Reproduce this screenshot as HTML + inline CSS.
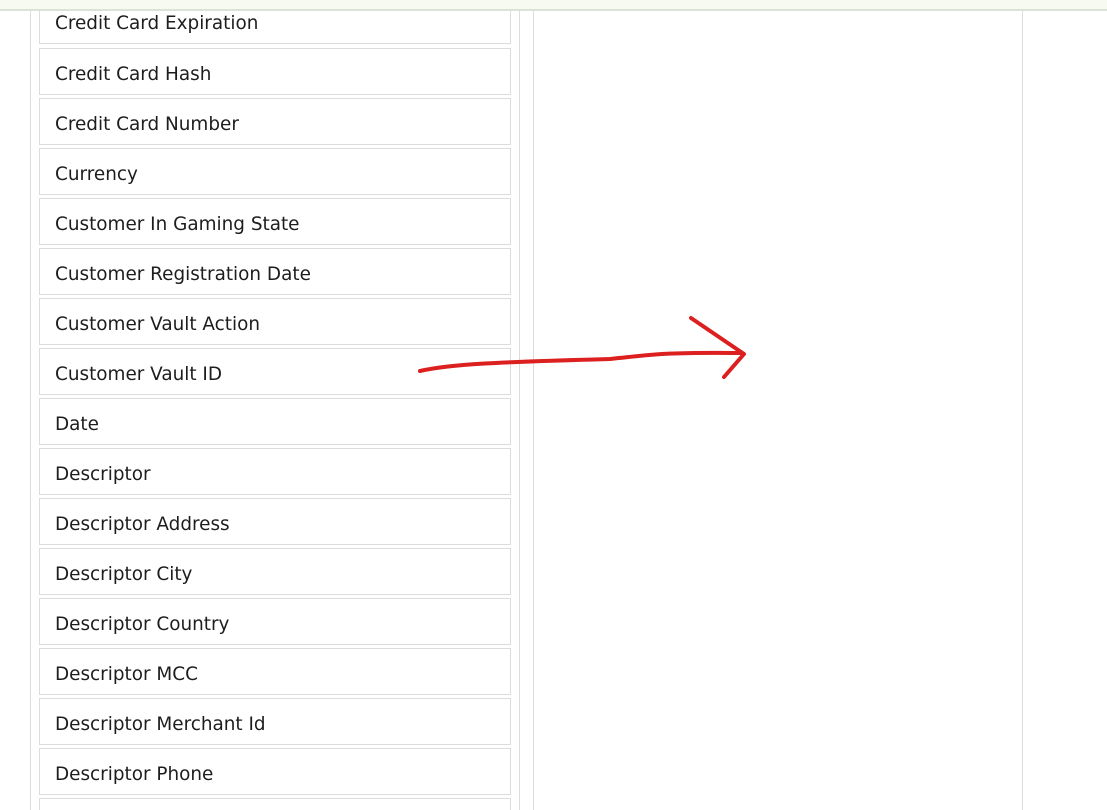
<!DOCTYPE html>
<html><head><meta charset="utf-8"><style>
html,body{margin:0;padding:0;background:#fff;width:1107px;height:810px;overflow:hidden;position:relative;font-family:"DejaVu Sans","Liberation Sans",sans-serif}
.top{position:absolute;left:0;top:0;width:1107px;height:9px;background:#f7faf0;border-bottom:2px solid #dde2d8}
.v{position:absolute;top:11px;bottom:0;width:1px;background:#dcdcdc}
.item{position:absolute;left:39px;width:470px;height:45px;border:1px solid #dcdcdc;box-sizing:content-box;font-size:18.4px;color:#1d1d1d;line-height:45px}
.item span{position:absolute;left:15px;top:3px}
</style></head><body>
<div class="v" style="left:30px"></div>
<div class="v" style="left:519px"></div>
<div class="v" style="left:533px"></div>
<div class="v" style="left:1022px"></div>
<div class="item" style="top:-3px"><span>Credit Card Expiration</span></div>
<div class="item" style="top:48px"><span>Credit Card Hash</span></div>
<div class="item" style="top:98px"><span>Credit Card Number</span></div>
<div class="item" style="top:148px"><span>Currency</span></div>
<div class="item" style="top:198px"><span>Customer In Gaming State</span></div>
<div class="item" style="top:248px"><span>Customer Registration Date</span></div>
<div class="item" style="top:298px"><span>Customer Vault Action</span></div>
<div class="item" style="top:348px"><span>Customer Vault ID</span></div>
<div class="item" style="top:398px"><span>Date</span></div>
<div class="item" style="top:448px"><span>Descriptor</span></div>
<div class="item" style="top:498px"><span>Descriptor Address</span></div>
<div class="item" style="top:548px"><span>Descriptor City</span></div>
<div class="item" style="top:598px"><span>Descriptor Country</span></div>
<div class="item" style="top:648px"><span>Descriptor MCC</span></div>
<div class="item" style="top:698px"><span>Descriptor Merchant Id</span></div>
<div class="item" style="top:748px"><span>Descriptor Phone</span></div>
<div class="item" style="top:798px"><span></span></div>
<div class="top"></div>
<svg style="position:absolute;left:0;top:0" width="1107" height="810">
<path d="M420 371 C 450 364, 500 362, 610 359 C 650 355, 660 352, 742 353" stroke="#dc1f1f" stroke-width="4" fill="none" stroke-linecap="round"/>
<path d="M691 318 L744 354 L724 377" stroke="#dc1f1f" stroke-width="4" fill="none" stroke-linecap="round" stroke-linejoin="round"/>
</svg>
</body></html>
